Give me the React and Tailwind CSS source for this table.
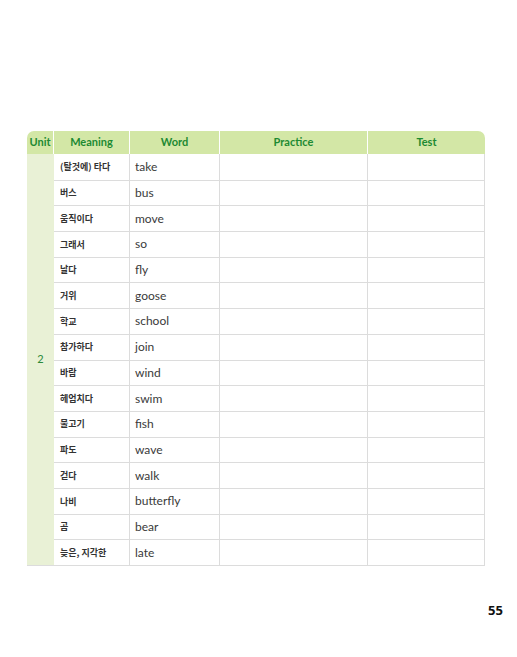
import React from 'react'

const words = [
  ['(탈것에) 타다', 'take'],
  ['버스', 'bus'],
  ['움직이다', 'move'],
  ['그래서', 'so'],
  ['날다', 'fly'],
  ['거위', 'goose'],
  ['학교', 'school'],
  ['참가하다', 'join'],
  ['바람', 'wind'],
  ['헤엄치다', 'swim'],
  ['물고기', 'fish'],
  ['파도', 'wave'],
  ['걷다', 'walk'],
  ['나비', 'butterfly'],
  ['곰', 'bear'],
  ['늦은, 지각한', 'late'],
]

const cols = 'grid grid-cols-[27px_76px_90px_148px_117px]'

const App = () => {
  return (
    <div className="w-[517px] h-[657px] bg-white relative font-['Lato','Noto_Sans_CJK_KR',sans-serif]">
      <div className="pt-[131px] pl-[27px]">
        <div className="w-[458px]">
          {/* header */}
          <div className={`${cols} h-[23px] bg-[#d3e7a6] rounded-t-[7px] text-[11px] font-bold text-[#1d8a32]`}>
            <div className="flex items-center justify-center border-r border-white">Unit</div>
            <div className="flex items-center justify-center border-r border-white">Meaning</div>
            <div className="flex items-center justify-center border-r border-white">Word</div>
            <div className="flex items-center justify-center border-r border-white">Practice</div>
            <div className="flex items-center justify-center">Test</div>
          </div>

          {/* body */}
          <div className="flex border-b border-[#dcdcdc]">
            <div className="w-[27px] bg-[#e9f1d6] flex items-center justify-center text-[11px] text-[#2c8a3a]">
              2
            </div>
            <div className="flex-1 border-r border-[#dcdcdc]">
              {words.map(([meaning, word], i) => (
                <div
                  key={word}
                  className={`grid grid-cols-[76px_90px_148px_116px] h-[25.7px] ${i > 0 ? 'border-t border-[#dcdcdc]' : ''}`}
                >
                  <div className="flex items-center pl-[6px] text-[9px] font-semibold text-[#333] font-['Noto_Sans_CJK_KR',sans-serif] border-r border-[#dcdcdc]">
                    {meaning}
                  </div>
                  <div className="flex items-center pl-[5px] text-[12px] text-[#3a3a3a] border-r border-[#dcdcdc]">
                    {word}
                  </div>
                  <div className="border-r border-[#dcdcdc]"></div>
                  <div></div>
                </div>
              ))}
            </div>
          </div>
        </div>
      </div>

      <div className="absolute left-[488px] top-[601px] text-[13px] font-bold text-[#111] font-['Open_Sans',sans-serif]">
        55
      </div>
    </div>
  )
}

export default App
